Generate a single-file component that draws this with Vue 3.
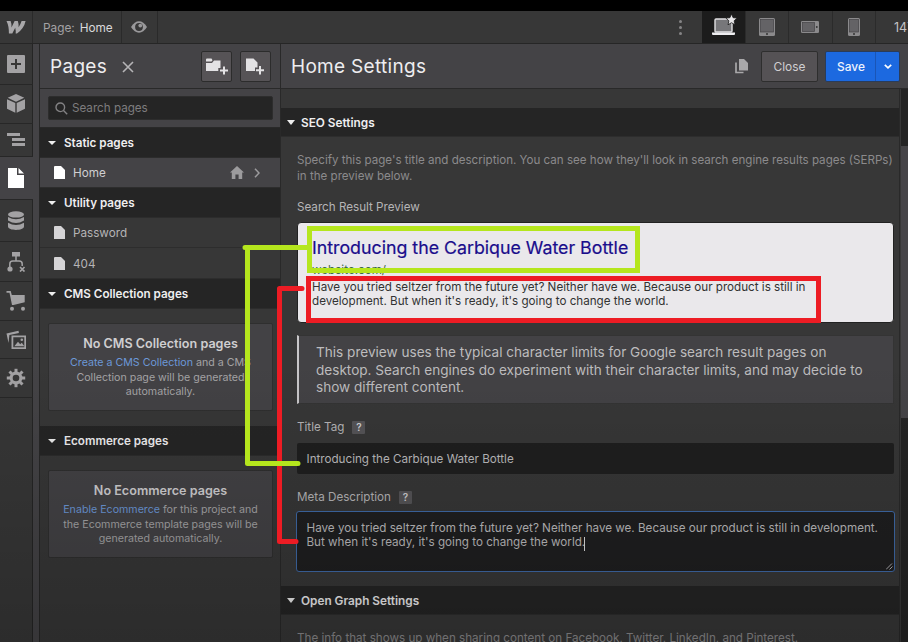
<script setup>
const devices = ['laptop', 'tablet', 'landscape', 'phone']
const rail = [
  { name: 'add', h: 41 },
  { name: 'box', h: 39 },
  { name: 'navigator', h: 33 },
  { name: 'page', h: 43, active: true },
  { name: 'database', h: 42 },
  { name: 'logic', h: 40 },
  { name: 'cart', h: 39 },
  { name: 'assets', h: 38 },
  { name: 'gear', h: 39 },
]
const teeth = [0, 45, 90, 135, 180, 225, 270, 315]
</script>

<template>
  <div class="app">
    <header class="topbar">
      <div class="logo">
        <svg width="20" height="14" viewBox="0 0 20 14"><path d="M.5 1H4.600q1 2 .9 6.500L8.600 1h3.200q1 2.500.8 6.300Q14.500 4.500 15.600 1H19.600Q18 8.500 11 13.500H9.700Q9.900 10.500 9.200 7.800L6.300 13.500H2.900Q3 6 .5 1Z" fill="#a9a8aa" /></svg>
      </div>
      <div class="crumb"><span class="dim">Page:</span><span class="cur">Home</span></div>
      <div class="eye">
        <svg width="16" height="12" viewBox="0 0 16 12"><path d="M0 6Q3.500.3 8 .3T16 6Q12.500 11.700 8 11.700T0 6Z" fill="#9a999b" /><circle cx="8" cy="6" r="3.900" fill="#373737" /><circle cx="9.300" cy="4.600" r="1.900" fill="#9a999b" /></svg>
      </div>
      <div class="more"><i /><i /><i /></div>
      <div v-for="d in devices" :key="d" class="device" :class="{ on: d === 'laptop' }">
        <svg v-if="d === 'laptop'" width="26" height="22" viewBox="0 0 26 22">
          <rect x="4" y="5" width="17" height="13" rx="1" fill="#77777a" stroke="#e2e1e3" stroke-width="1.400" />
          <path d="M1 18.500h23v1.500q0 1-1 1H2q-1 0-1-1z" fill="#eeedf0" />
          <path d="M20.500 0l1.600 3.700 4 .4-3 2.700.9 4-3.500-2.100-3.500 2.100.9-4-3-2.700 4-.4z" fill="#e8e7e9" stroke="#1c1c1c" stroke-width=".8" />
        </svg>
        <svg v-else-if="d === 'tablet'" width="16" height="18" viewBox="0 0 16 18"><rect width="16" height="18" rx="1.500" fill="#8b8a8c" /><rect x="1.500" y="1.500" width="13" height="12.500" fill="#646366" stroke="#454446" stroke-width=".7" /><circle cx="8" cy="16" r="1" fill="#333" /></svg>
        <svg v-else-if="d === 'landscape'" width="18" height="12" viewBox="0 0 18 12"><rect width="18" height="12" rx="1.300" fill="#8b8a8c" /><rect x="1.500" y="1.500" width="12" height="9" fill="#646366" stroke="#454446" stroke-width=".7" /><circle cx="15.800" cy="6" r=".9" fill="#333" /></svg>
        <svg v-else width="12" height="18" viewBox="0 0 12 18"><rect width="12" height="18" rx="1.500" fill="#8b8a8c" /><rect x="1.500" y="1.500" width="9" height="12.500" fill="#646366" stroke="#454446" stroke-width=".7" /><circle cx="6" cy="16" r="1" fill="#333" /></svg>
      </div>
      <div class="px">147</div>
    </header>

    <div class="body">
      <nav class="rail">
        <div v-for="r in rail" :key="r.name" class="tool" :class="{ active: r.active }" :style="{ height: r.h + 'px' }">
          <svg width="20" height="20" viewBox="0 0 20 20" fill="#a3a2a4">
            <template v-if="r.name === 'add'"><rect x="1" y="1" width="18" height="18" rx="1" /><path d="M10 5v10M5 10h10" stroke="#373737" stroke-width="2" /></template>
            <template v-else-if="r.name === 'box'"><path d="M10 0l8.300 3.800L10 7.700 1.700 3.800zM1 5.300l8.300 3.800v9.600L1 14.800zM19 5.300l-8.300 3.800v9.600l8.300-3.900z" /></template>
            <template v-else-if="r.name === 'navigator'"><path d="M1 3h13v3H1zM6 8h13v3H6zM6 13h13v3H6z" /></template>
            <template v-else-if="r.name === 'page'"><path d="M2 0h9v7h7v13H2zM12.500 0l5.500 5.500h-5.500z" fill="#fff" /></template>
            <template v-else-if="r.name === 'database'"><ellipse cx="10" cy="3.400" rx="8" ry="3.200" /><path d="M2 6q8 4.500 16 0v3.400q-8 5-16 0zM2 11.700q8 4.700 16 0v3.800c0 4.500-16 4.500-16 0z" /></template>
            <template v-else-if="r.name === 'logic'"><rect x="6" y="0" width="8" height="4.500" /><path d="M10 4v5M3.800 15V12q0-3 3-3h6.400q3 0 3 3v2" fill="none" stroke="#a3a2a4" stroke-width="1.500" /><circle cx="4" cy="17" r="2.600" /><path d="M14 15l4.500 4.500M18.500 15L14 19.500" stroke="#a3a2a4" stroke-width="1.700" /></template>
            <template v-else-if="r.name === 'cart'"><path d="M.5 0H4.700L5.800 4H18.700V11.300L7.500 14 6 14 3.500 1.700H.5z" /><circle cx="6" cy="17.800" r="2" /><circle cx="17" cy="17.800" r="2" /></template>
            <template v-else-if="r.name === 'assets'"><path d="M2.500 13L.5 3.500 12.500.8l.4 2.200-9.500 2z" /><path d="M5.500 5.500H20V19H5.500z" /><path d="M7.300 7.300h11v10h-11z" fill="#373737" /><path d="M8.300 16.300l3.700-4.500 2.200 2.500 1.600-1.600 2.500 3.600z" /><circle cx="15.800" cy="9.700" r="1.300" /></template>
            <template v-else><circle cx="10" cy="10" r="6.400" /><rect v-for="t in teeth" :key="t" x="8.500" y=".8" width="3" height="5" :transform="`rotate(${t} 10 10)`" /><circle cx="10" cy="10" r="3.300" fill="#373737" /></template>
          </svg>
        </div>
      </nav>

      <aside class="pages">
        <div class="phead">
          <h2>Pages</h2>
          <svg class="x" width="12" height="12" viewBox="0 0 12 12"><path d="M1 1l10 10M11 1L1 11" stroke="#b5b4b6" stroke-width="1.600" /></svg>
          <button class="sq"><svg width="22" height="17" viewBox="0 0 22 17"><path d="M0 1.500q0-1 1-1h4.500l1 1.800L5.500 3.500H0zM0 5h6l2-2.500h6.500v7.500h-2.200v3H0z" fill="#e3e2e4" /><path d="M18 8.500v8M14 12.500h8" stroke="#e3e2e4" stroke-width="2" /></svg></button>
          <button class="sq"><svg width="19" height="17" viewBox="0 0 19 17"><path d="M0 .5h7.500l4 4v5H9v3.500H0z" fill="#e3e2e4" /><path d="M14 8v8.500M10 12.300h8" stroke="#e3e2e4" stroke-width="2" /></svg></button>
        </div>
        <div class="searchwrap">
          <div class="search">
            <svg width="13" height="13" viewBox="0 0 13 13" fill="none" stroke="#838284" stroke-width="1.400"><circle cx="5.300" cy="5.300" r="4.300" /><path d="M8.500 8.500l3.700 3.700" /></svg>
            <span>Search pages</span>
          </div>
        </div>
        <div class="group"><i class="tri" />Static pages</div>
        <div class="row sel">
          <svg width="11" height="13" viewBox="0 0 11 13"><path d="M0 1q0-1 1-1h6l4 4v9H0z" fill="#fff" /></svg>
          <span>Home</span>
          <svg class="home" width="14" height="13" viewBox="0 0 14 13"><path d="M7 0l7 6.500h-1.800V13H8.600V8.500H5.400V13H1.800V6.500H0z" fill="#9c9b9d" /></svg>
          <svg width="6" height="10" viewBox="0 0 6 10"><path d="M1 .7L5 5 1 9.300" fill="none" stroke="#9c9b9d" stroke-width="1.500" /></svg>
        </div>
        <div class="group"><i class="tri" />Utility pages</div>
        <div class="row">
          <svg width="11" height="13" viewBox="0 0 11 13"><path d="M0 1q0-1 1-1h6l4 4v9H0z" fill="#d5d4d6" /></svg><span>Password</span>
        </div>
        <div class="row second">
          <svg width="11" height="13" viewBox="0 0 11 13"><path d="M0 1q0-1 1-1h6l4 4v9H0z" fill="#d5d4d6" /></svg><span>404</span>
        </div>
        <div class="group cms"><i class="tri" />CMS Collection pages</div>
        <div class="empty">
          <h4>No CMS Collection pages</h4>
          <p><a>Create a CMS Collection</a> and a CMS<br />Collection page will be generated<br />automatically.</p>
        </div>
        <div class="group"><i class="tri" />Ecommerce pages</div>
        <div class="empty">
          <h4>No Ecommerce pages</h4>
          <p><a>Enable Ecommerce</a> for this project and<br />the Ecommerce template pages will be<br />generated automatically.</p>
        </div>
      </aside>

      <main class="settings">
        <div class="shead">
          <h2>Home Settings</h2>
          <svg class="copy" width="13" height="15" viewBox="0 0 13 15"><path d="M4 0h5l4 4v7.500H4z" fill="#a9a8aa" /><path d="M1 3.500v10h7.500" fill="none" stroke="#a9a8aa" stroke-width="1.700" /></svg>
          <button class="close">Close</button>
          <div class="save"><b>Save</b><i><svg width="8" height="5" viewBox="0 0 8 5"><path d="M.8.800L4 3.800 7.200.8" fill="none" stroke="#fff" stroke-width="1.700" /></svg></i></div>
        </div>
        <div class="scroll">
          <div class="content">
            <div class="bar"><i class="tri" />SEO Settings</div>
            <div class="form">
              <p class="hint">Specify this page's title and description. You can see how they'll look in search engine results pages (SERPs)<br />in the preview below.</p>
              <div class="label preview-label">Search Result Preview</div>
              <div class="preview">
                <div class="ptitle">Introducing the Carbique Water Bottle</div>
                <div class="purl">website.com/</div>
                <div class="pdesc">Have you tried seltzer from the future yet? Neither have we. Because our product is still in<br />development. But when it's ready, it's going to change the world.</div>
              </div>
              <div class="note">This preview uses the typical character limits for Google search result pages on<br />desktop. Search engines do experiment with their character limits, and may decide to<br />show different content.</div>
              <div class="label tag-label">Title Tag <em>?</em></div>
              <div class="input">Introducing the Carbique Water Bottle</div>
              <div class="label meta-label">Meta Description <em>?</em></div>
              <div class="area">
                Have you tried seltzer from the future yet? Neither have we. Because our product is still in development.<br />But when it's ready, it's going to change the world.<i class="caret" />
                <svg class="grip" width="7" height="7" viewBox="0 0 7 7"><path d="M0 6.500L6 .5M3.500 6.500L6.500 3.500" stroke="#b0afb1" stroke-width="1" /></svg>
              </div>
            </div>
            <div class="bar"><i class="tri" />Open Graph Settings</div>
            <p class="hint og">The info that shows up when sharing content on Facebook, Twitter, LinkedIn, and Pinterest.</p>
          </div>
          <div class="track"><div class="thumb" /></div>
        </div>
      </main>
    </div>

    <div class="shade" />
    <svg class="marks" width="908" height="642" viewBox="0 0 908 642" fill="none" stroke-width="5" stroke-linejoin="round">
      <g stroke="#ed1c24">
        <rect x="308.500" y="278.500" width="510" height="42" stroke-linejoin="miter" />
        <path d="M302 288.500H279.500V541.500H296" stroke-linecap="round" />
      </g>
      <g stroke="#b5e61d">
        <rect x="309.500" y="228.500" width="328" height="42" stroke-linejoin="miter" />
        <path d="M308 247.500H245M247.500 247.500V463.500H298" stroke-linecap="round" />
      </g>
    </svg>
  </div>
</template>

<style>
body { background: #000; overflow: hidden; }
</style>

<style scoped>
* { box-sizing: border-box; }
h2, h4, p { margin: 0; font-weight: 400; }
svg { display: block; flex: none; }
button { padding: 0; font: inherit; }
.app { position: relative; width: 908px; height: 642px; overflow: hidden; padding-top: 11px; background: #000; font-family: Inter, "Liberation Sans", sans-serif; font-size: 11.650px; color: #d0cfd1; white-space: nowrap; }
.topbar { display: flex; height: 33px; background: #373737; border-bottom: 1px solid #262626; align-items: stretch; }
.topbar > div { display: flex; align-items: center; justify-content: center; flex: none; }
.logo { width: 33px; border-right: 1px solid #2a2a2a; }
.topbar .crumb { width: 89px; border-right: 1px solid #2a2a2a; gap: 5px; font-size: 11.800px; padding: 1px 0 0 10px; justify-content: flex-start; }
.dim { color: #a3a2a4; }
.cur { color: #dad9db; }
.eye { width: 36px; border-right: 1px solid #2a2a2a; }
.eye svg { margin-right: 1px; }
.topbar .more { margin-left: auto; width: 44px; flex-direction: column; gap: 3px; }
.more i { width: 3px; height: 3px; border-radius: 50%; background: #858486; }
.device { width: 43.500px; border-right: 1px solid #2b2b2b; }
.device.on { background: #1c1c1c; }
.device.on svg { margin: -5px 0 0 1px; }
.topbar .px { width: 32px; padding-left: 18px; justify-content: flex-start; font-size: 12.500px; color: #c4c3c5; overflow: hidden; }
.body { display: flex; height: 598px; }
.rail { width: 40px; flex: none; background: linear-gradient(90deg, #373737 32px, #252525 32px, #252525 33px, #444346 33px, #444346 39px, #272727 39px); }
.tool { width: 33px; border-bottom: 1px solid #272727; display: flex; align-items: center; justify-content: center; padding-right: 1px; }
.tool.active { background: #444346; }
.pages { width: 240px; flex: none; background: #373737; }
.phead { height: 45px; background: #444346; border-bottom: 1px solid #292929; display: flex; align-items: center; padding: 0 9px 0 10px; }
h2 { font-size: 19px; line-height: 24px; color: #eeedef; letter-spacing: .3px; padding-top: 2px; }
.x { margin: 1px auto 0 15px; }
.sq { width: 31px; height: 31px; background: #565356; border: 1px solid #2c2c2c; border-radius: 2px; margin-left: 8px; display: flex; align-items: center; justify-content: center; }
.searchwrap { height: 39px; background: #444346; border-bottom: 1px solid #292929; padding: 7px 8px; }
.search { width: 225px; height: 24px; border-radius: 2px; background: #252525; border: 1px solid #2d2d2d; padding-left: 6px; display: flex; align-items: center; gap: 4px; color: #7d7c7e; font-size: 11.650px; }
.group, .bar { display: flex; align-items: center; background: #252525; font-weight: 600; color: #efeef0; }
.group { height: 30px; border-bottom: 1px solid #2c2c2c; padding-left: 8px; font-size: 11.650px; }
.tri { border: 4px solid transparent; border-top: 4px solid #eee; border-bottom: 0; margin-right: 8px; }
.row { height: 30px; display: flex; align-items: center; padding: 0 20px 0 14px; border-bottom: 1px solid #2d2d2d; color: #b5b4b6; font-size: 11.700px; gap: 8px; }
.row.sel { background: #444346; color: #d0cfd1; }
.row.second { height: 31px; padding-top: 1px; }
.home { margin: 0 2px 0 auto; }
.empty { margin: 14px 8px 15px; height: 88px; background: #434245; border: 1px solid #2f2f2f; border-radius: 2px; text-align: center; padding-top: 12px; width: 225px; }
.empty h4 { font-size: 12.600px; line-height: 16px; font-weight: 600; color: #cfced0; }
.empty p { font-size: 10.650px; line-height: 14.500px; color: #a5a4a6; margin-top: 4px; }
.empty a { color: #6c98d8; }
.settings { flex: 1; min-width: 0; border-left: 1px solid #292929; display: flex; flex-direction: column; background: #373737; }
.shead { height: 45px; flex: none; background: #444346; border-bottom: 1px solid #292929; display: flex; align-items: center; padding: 0 8px 0 10px; }
.copy { margin: 0 13px 0 auto; }
.close { width: 57px; height: 31px; border: 1px solid #2e2e2e; border-radius: 2px; background: #555255; color: #d0cfd1; font-size: 11.900px; margin-right: 7px; padding-top: 1px; }
.save { display: flex; width: 75px; height: 31px; border: 1px solid #2a3c5a; border-radius: 2px; background: #1c69e0; color: #eef2fc; font-size: 11.900px; align-items: stretch; }
.save b { flex: 1; font-weight: 500; display: flex; align-items: center; justify-content: center; padding: 1px 0 0 1px; }
.save i { width: 24px; border-left: 1px solid #1a55b6; display: flex; align-items: center; justify-content: center; }
.scroll { flex: 1; display: flex; min-height: 0; }
.content { width: 619px; flex: none; padding-top: 19px; border-right: 1px solid #292929; overflow: hidden; }
.bar { height: 29px; border-bottom: 1px solid #2d2d2d; padding: 1px 0 0 6px; font-size: 11.800px; }
.bar .tri { margin-right: 6px; border-top-width: 5px; }
.form { padding: 16px 0 0 16px; height: 449px; display: flex; flex-direction: column; }
.hint { line-height: 15.500px; font-size: 11.580px; color: #8b8a8c; }
.label { color: #b5b4b6; line-height: 16px; display: flex; align-items: center; gap: 8px; }
.preview-label { margin-top: 15px; }
.label em { width: 13px; height: 13px; background: #555457; color: #d0cfd1; font-style: normal; font-weight: 600; font-size: 10px; display: flex; align-items: center; justify-content: center; border-radius: 1px; }
.preview { margin-top: 7px; height: 101px; width: 597px; background: #eae8eb; border: 1px solid #222; border-radius: 4px; padding: 14px 0 0 14px; }
.ptitle { font-size: 17.780px; line-height: 22px; color: #1a0d8c; -webkit-text-stroke: .2px #1a0d8c; }
.purl { line-height: 14px; color: #3f6b48; margin-top: 4px; }
.pdesc { line-height: 13.800px; color: #333; margin-top: 4px; }
.note { margin-top: 12px; height: 69px; width: 597px; background: #434245; border: 1px solid #343434; border-left: 2px solid #c8c7c9; padding: 8px 0 0 17px; font-size: 13.580px; line-height: 17.500px; color: #bdbcbe; }
.tag-label { margin-top: 15px; }
.input { margin-top: 8px; height: 31px; width: 597px; background: #1f1f1f; border-radius: 2px; padding: 0 9.500px; display: flex; align-items: center; color: #bcbbbd; }
.meta-label { margin-top: 15px; }
.area { position: relative; margin: 6px 0 0 -1px; height: 61px; width: 599px; background: #1f1f20; border: 1px solid #3f6aa8; border-radius: 3px; padding: 10px 0 0 9.500px; line-height: 13.800px; color: #bcbbbd; }
.caret { display: inline-block; width: 1px; height: 14px; margin: -2px 0 -2px -1px; background: #ddd; vertical-align: -3px; }
.grip { position: absolute; right: 1px; bottom: 1px; }
.og { padding: 16px 0 0 16px; font-size: 11.650px; }
.track { flex: 1; background: #242424; margin-left: 1px; padding-top: 57px; }
.thumb { height: 272px; background: #454447; }
.shade { position: absolute; inset: 360px 0 0; background: linear-gradient(transparent, rgba(0, 0, 0, .2)); }
.marks { position: absolute; inset: 0; }
</style>
